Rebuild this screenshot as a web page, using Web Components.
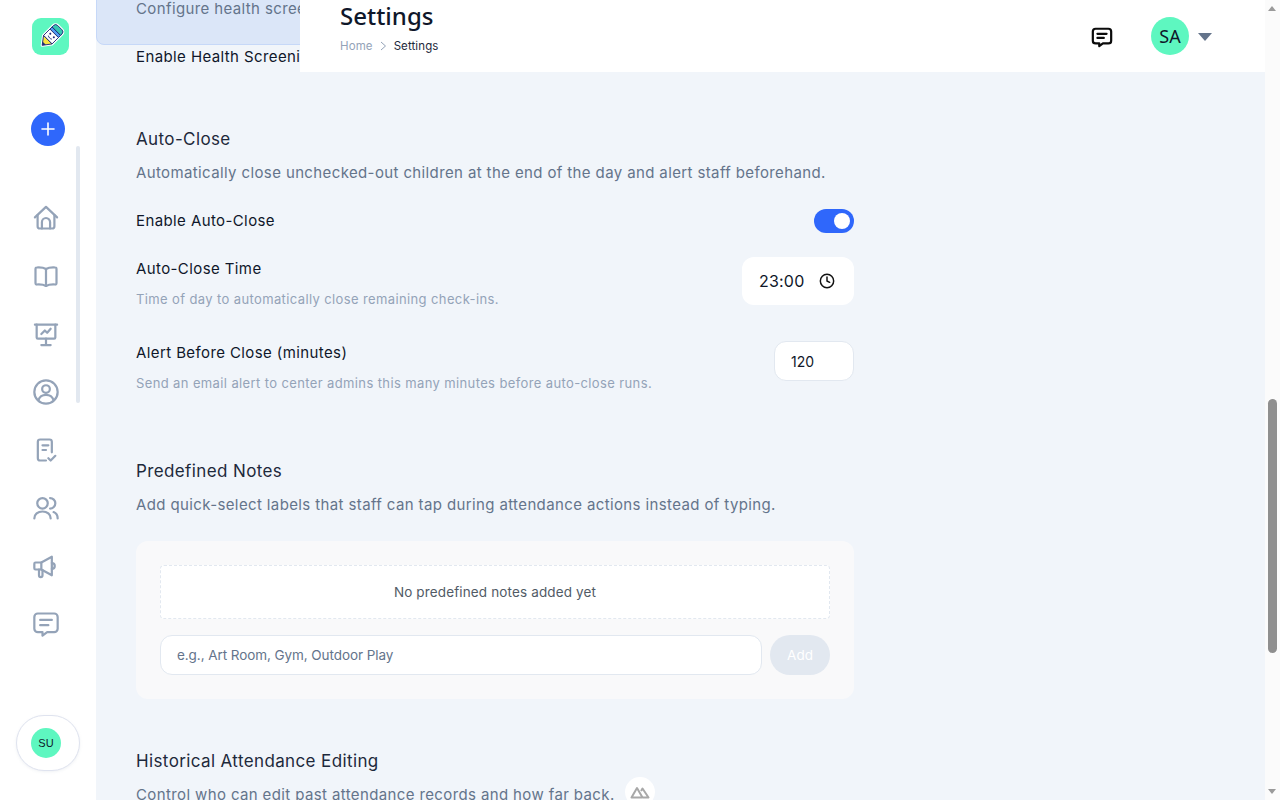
<!DOCTYPE html>
<html lang="en">
<head>
<meta charset="utf-8">
<title>Settings</title>
<style>
  html, body { margin: 0; height: 100%; overflow: hidden; }
  body { font-family: "Inter", "Liberation Sans", sans-serif; color: #0f172a; background: #f1f5fa; }
</style>
</head>
<body>
<app-shell>
  <side-bar slot="side"></side-bar>
  <top-bar slot="top"></top-bar>
  <settings-page slot="main"></settings-page>
  <page-scrollbar slot="scroll"></page-scrollbar>
</app-shell>

<script>
// icons, all on a 24 box
const ICONS = {
  home: '<path d="M2.500 11.500 12 2.500l9.500 9"/><path d="M4.800 9.500V19a2 2 0 0 0 2 2h10.400a2 2 0 0 0 2-2V9.500"/><path d="M8.500 21v-5.500a3.500 3.500 0 0 1 7 0V21"/>',
  book: '<path d="M12 6C10 4.800 7 4.500 4 4.700a1 1 0 0 0-1 1v12.600a1 1 0 0 0 1 1c3-.2 6 .1 8 1.200 2-1.100 5-1.400 8-1.200a1 1 0 0 0 1-1V5.700a1 1 0 0 0-1-1C17 4.500 14 4.800 12 6Z"/><path d="M12 6v14.500"/>',
  chart: '<path d="M2.500 4h19"/><path d="M4 4v11a1 1 0 0 0 1 1h14a1 1 0 0 0 1-1V4"/><path d="M12 16v5M8 21.500h8"/><path d="m8 12 3-3 2 2 3-3.500"/>',
  user: '<circle cx="12" cy="12" r="10"/><circle cx="12" cy="9.500" r="3.300"/><path d="M5.500 19c1-3 3.500-4.500 6.500-4.500s5.500 1.500 6.500 4.500"/>',
  task: '<path d="M12 21H7a2 2 0 0 1-2-2V5a2 2 0 0 1 2-2h8a2 2 0 0 1 2 2v9"/><path d="M9 8h5M9 12h3"/><path d="m14 19 2 2 4-4"/>',
  people: '<circle cx="9" cy="8" r="4.500"/><path d="M2 21c0-3.500 3-6 7-6s7 2.500 7 6"/><path d="M15.500 3.500a4.500 4.500 0 0 1 0 9"/><path d="M18.500 15.500c2 .8 3.500 2.800 3.500 5.500"/>',
  horn: '<path d="M3 9h5v6H3a1 1 0 0 1-1-1v-4a1 1 0 0 1 1-1Z"/><path d="m8 9 9-5v16l-9-5"/><path d="M17 9.500a2.500 2.500 0 0 1 0 5"/><path d="M6 15v5a1.500 1.500 0 0 0 3 0v-4.500"/>',
  chat: '<path d="M5 3h14a3 3 0 0 1 3 3v10a3 3 0 0 1-3 3h-6l-4 3v-3H5a3 3 0 0 1-3-3V6a3 3 0 0 1 3-3Z"/><path d="M7 8.500h10M7 13h7"/>'
};

function icon(name, size, weight, color) {
  return `<svg width="${size}" height="${size}" viewBox="0 0 24 24" fill="none" stroke="${color}" stroke-width="${weight}" stroke-linecap="round" stroke-linejoin="round">${ICONS[name]}</svg>`;
}

class AppShell extends HTMLElement {
  constructor() {
    super();
    this.attachShadow({ mode: "open" }).innerHTML = `
    <style>
      :host { display: grid; grid-template-columns: 96px 1fr 15px; height: 800px; overflow: hidden; position: relative; }
      .main { position: relative; overflow: hidden; height: 800px; }
      .top { position: absolute; top: 0; left: 204px; right: 0; z-index: 2; }
    </style>
    <slot name="side"></slot>
    <div class="main">
      <div class="top"><slot name="top"></slot></div>
      <slot name="main"></slot>
    </div>
    <slot name="scroll"></slot>
    `;
  }
}

class SideBar extends HTMLElement {
  constructor() {
    super();
    const items = ["home", "book", "chart", "user", "task", "people", "horn", "chat"];
    this.attachShadow({ mode: "open" }).innerHTML = `
    <style>
      :host { display: flex; flex-direction: column; align-items: center; height: 800px; background: #fff; position: relative; }
      .logo { margin-top: 18px; width: 37px; height: 37px; border-radius: 9px; background: #5ef7c0; display: flex; align-items: center; justify-content: center; margin-left: 5px; }
      .logo svg { overflow: visible; }
      .plus { margin-top: 57px; width: 34px; height: 34px; border-radius: 50%; background: #2f67fb; display: flex; align-items: center; justify-content: center; }
      .nav { margin-top: 58px; display: flex; flex-direction: column; gap: 30px; margin-left: -4px; }
      .nav div { width: 28px; height: 28px; }
      .track { position: absolute; left: 76px; top: 146px; width: 4px; height: 257px; border-radius: 2px; background: #e2e8f0; }
      .me { margin-top: auto; margin-bottom: 29px; width: 62px; height: 54px; border: 1px solid #dfe3ef; border-radius: 28px; background: #fff; display: flex; align-items: center; justify-content: center; box-shadow: 0 1px 3px rgba(148,163,184,.15); }
      .me span { width: 30px; height: 30px; margin-right: 4px; border-radius: 50%; background: #5ef7c0; display: flex; align-items: center; justify-content: center; font: 11px "Liberation Sans", sans-serif; color: #0f172a; }
    </style>
    <div class="logo">
      <svg width="30" height="30" viewBox="0 0 30 30">
        <g transform="rotate(45 15 14.500)">
          <path d="M9 5a3 3 0 0 1 3-3h6a3 3 0 0 1 3 3v14l-6 8-6-8Z" fill="#fff" stroke="#fff" stroke-width="3" stroke-linejoin="round"/>
          <path d="M9 7V5a3 3 0 0 1 3-3h6a3 3 0 0 1 3 3v2Z" fill="#35c6b0" stroke="#1e2a78" stroke-width=".9"/>
          <rect x="9" y="7" width="12" height="3" fill="#4f9cf0" stroke="#1e2a78" stroke-width=".9"/>
          <rect x="9" y="10" width="12" height="9" fill="#fff" stroke="#1e2a78" stroke-width=".9"/>
          <circle cx="12.500" cy="13" r="1" fill="#1e2a78"/><circle cx="17.500" cy="13" r="1" fill="#1e2a78"/>
          <path d="M12.500 15.800c1.300 1 3.700 1 5 0" fill="none" stroke="#1e2a78" stroke-width=".9"/>
          <path d="M9 19h12l-6 8Z" fill="#f7e23e" stroke="#1e2a78" stroke-width=".9" stroke-linejoin="round"/>
          <path d="M12.800 24h4.400L15 27Z" fill="#1e2a78"/>
        </g>
      </svg>
    </div>
    <div class="plus"><svg width="14" height="14" viewBox="0 0 14 14" stroke="#fff" stroke-width="1.600" stroke-linecap="round"><path d="M7 1v12M1 7h12"/></svg></div>
    <div class="nav">${items.map(n => `<div>${icon(n, 28, 1.900, "#94a3b8")}</div>`).join("")}</div>
    <div class="track"></div>
    <div class="me"><span>SU</span></div>
    `;
  }
}

class TopBar extends HTMLElement {
  constructor() {
    super();
    this.attachShadow({ mode: "open" }).innerHTML = `
    <style>
      :host { display: flex; align-items: flex-start; height: 72px; background: #fff; padding-left: 40px; padding-right: 53px; box-sizing: border-box; }
      .t { flex: 1; }
      h1 { margin: 0; font: 500 24px/32px "Noto Sans", "Open Sans", sans-serif; color: #0f172a; }
      .crumb { margin-top: 5px; font-size: 11.500px; letter-spacing: .1px; line-height: 18px; color: #94a3b8; display: flex; align-items: center; gap: 6px; }
      .crumb b { font-weight: 400; color: #1e293b; }
      .chat { margin: 26px 38px 0 0; width: 22px; height: 22px; }
      .sa { margin-top: 17px; width: 38px; height: 38px; border-radius: 50%; background: #5ef7c0; display: flex; align-items: center; justify-content: center; font: 18px "Noto Sans", "Open Sans", sans-serif; color: #0f172a; }
      .caret { margin: 33px 0 0 9px; width: 0; height: 0; border-left: 7px solid transparent; border-right: 7px solid transparent; border-top: 8px solid #64748b; }
    </style>
    <div class="t">
      <h1>Settings</h1>
      <div class="crumb">Home <svg width="9" height="10" viewBox="0 0 9 10" fill="none" stroke="#94a3b8" stroke-width="1"><path d="m2 1 4.500 4L2 9"/></svg> <b>Settings</b></div>
    </div>
    <div class="chat">${icon("chat", 22, 2.400, "#0b0b0b")}</div>
    <div class="sa">SA</div>
    <div class="caret"></div>
    `;
  }
}

class SettingRow extends HTMLElement {
  constructor() {
    super();
    this.attachShadow({ mode: "open" }).innerHTML = `
    <style>
      :host { display: flex; justify-content: space-between; align-items: flex-start; }
      .l { font-size: 15px; letter-spacing: .4px; line-height: 24px; color: #0f172a; }
      .h { margin-top: 8px; font-size: 13px; letter-spacing: .38px; line-height: 20px; color: #94a3b8; }
    </style>
    <div><div class="l"><slot name="label"></slot></div><div class="h"><slot name="hint"></slot></div></div>
    <slot></slot>
    `;
  }
}

class ToggleSwitch extends HTMLElement {
  constructor() {
    super();
    this.attachShadow({ mode: "open" }).innerHTML = `
    <style>
      :host { display: block; width: 40px; height: 24px; border-radius: 12px; background: #2f67fb; position: relative; }
      i { position: absolute; top: 4px; right: 4px; width: 16px; height: 16px; border-radius: 50%; background: #fff; }
    </style><i></i>`;
  }
}

class SettingsPage extends HTMLElement {
  constructor() {
    super();
    this.attachShadow({ mode: "open" }).innerHTML = `
    <style>
      :host { display: block; padding-left: 40px; width: 718px; margin-top: -4px; font-size: 15px; }
      .banner { position: absolute; left: -40px; top: -20px; width: 300px; height: 69px; background: #dbe6f8; border: 1px solid #c6d8f8; border-radius: 8px; box-sizing: border-box; }
      .over { position: relative; }
      h2 { margin: 0; font-weight: 400; font-size: 17px; letter-spacing: .38px; line-height: 25px; color: #1e293b; }
      p { margin: 9px 0 0; font-size: 15px; letter-spacing: .38px; line-height: 24px; color: #64748b; }
      section { position: relative; }
      .add { display: flex; gap: 8px; margin-top: 16px; }
      .card { margin-top: 24px; background: #f9f9fa; border-radius: 12px; padding: 24px; }
      .empty { height: 52px; border: 1px dashed #e2e8f0; border-radius: 4px; background: #fff; display: flex; align-items: center; justify-content: center; font-size: 13.500px; letter-spacing: .14px; color: #525b66; }
      .inp { flex: 1; height: 38px; background: #fff; border: 1px solid #e2e8f0; border-radius: 12px; padding-left: 16px; display: flex; align-items: center; font-size: 13.500px; letter-spacing: -.07px; color: #64748b; }
      .btn { width: 60px; height: 40px; border-radius: 20px; background: #e2e8f0; color: #fff; display: flex; align-items: center; justify-content: center; font-size: 13.500px; }
      .time { width: 112px; height: 48px; background: #fff; border-radius: 12px; box-sizing: border-box; padding-left: 17px; display: flex; align-items: center; gap: 15px; font: 16px "Inter", sans-serif; letter-spacing: .2px; }
      .num { width: 80px; height: 40px; background: #fff; border: 1px solid #e2e8f0; border-radius: 12px; box-sizing: border-box; padding-left: 16px; display: flex; align-items: center; font-size: 14px; }
      .nuxt { display: inline-flex; position: absolute; left: 489px; top: 28px; width: 30px; height: 30px; border-radius: 50%; background: #fff; align-items: center; justify-content: center; }
      .line { margin-top: 24px; line-height: 24px; letter-spacing: .4px; color: #0f172a; white-space: nowrap; }
    </style>
    <div class="over" style="height: 0">
      <div class="banner"></div>
    </div>
    <section style="height: 131px">
      <p style="margin: 0; padding-top: 1px; white-space: nowrap">Configure health screening</p>
      <div class="line">Enable Health Screening</div>
    </section>
    <section style="height: 332px">
      <h2>Auto-Close</h2>
      <p>Automatically close unchecked-out children at the end of the day and alert staff beforehand.</p>
      <setting-row style="margin-top: 24px"><span slot="label">Enable Auto-Close</span><toggle-switch></toggle-switch></setting-row>
      <setting-row style="margin-top: 16px; height: 60px"><span slot="label">Auto-Close Time</span><span slot="hint">Time of day to automatically close remaining check-ins.</span>
        <div class="time">23:00 <svg width="16" height="16" viewBox="0 0 24 24" fill="none" stroke="#111" stroke-width="2.200" stroke-linecap="round" stroke-linejoin="round"><circle cx="12" cy="12" r="10"/><path d="M12 6v6l4 2"/></svg></div></setting-row>
      <setting-row style="margin-top: 24px"><span slot="label">Alert Before Close (minutes)</span><span slot="hint">Send an email alert to center admins this many minutes before auto-close runs.</span>
        <div class="num">120</div></setting-row>
    </section>
    <section style="height: 290px">
      <h2>Predefined Notes</h2>
      <p>Add quick-select labels that staff can tap during attendance actions instead of typing.</p>
      <div class="card">
        <div class="empty">No predefined notes added yet</div>
        <div class="add"><div class="inp">e.g., Art Room, Gym, Outdoor Play</div><div class="btn">Add</div></div>
      </div>
    </section>
    <section>
      <h2>Historical Attendance Editing</h2>
      <p>Control who can edit past attendance records and how far back.</p>
      <span class="nuxt"><svg width="20" height="14" viewBox="0 0 20 14" fill="none" stroke="#a8a8a8" stroke-width="2" stroke-linejoin="round"><path d="M1.500 12.500 7 3l5.500 9.500Z"/><path d="M11 6l1.500-2.500 6 9H13"/></svg></span>
    </section>
    `;
  }
}

class PageScrollbar extends HTMLElement {
  constructor() {
    super();
    this.attachShadow({ mode: "open" }).innerHTML = `
    <style>
      :host { display: block; width: 15px; height: 800px; background: #fbfbfb; position: relative; }
      .up, .down { position: absolute; left: 3px; width: 0; height: 0; border-left: 4.500px solid transparent; border-right: 4.500px solid transparent; }
      .up { top: 6px; border-bottom: 5px solid #9a9a9a; }
      .down { bottom: 6px; border-top: 5px solid #9a9a9a; }
      .thumb { position: absolute; left: 3px; top: 399px; width: 9px; height: 254px; border-radius: 5px; background: #8f8f8f; }
    </style>
    <div class="up"></div><div class="thumb"></div><div class="down"></div>`;
  }
}

customElements.define("app-shell", AppShell);
customElements.define("side-bar", SideBar);
customElements.define("top-bar", TopBar);
customElements.define("setting-row", SettingRow);
customElements.define("toggle-switch", ToggleSwitch);
customElements.define("settings-page", SettingsPage);
customElements.define("page-scrollbar", PageScrollbar);
</script>
</body>
</html>
